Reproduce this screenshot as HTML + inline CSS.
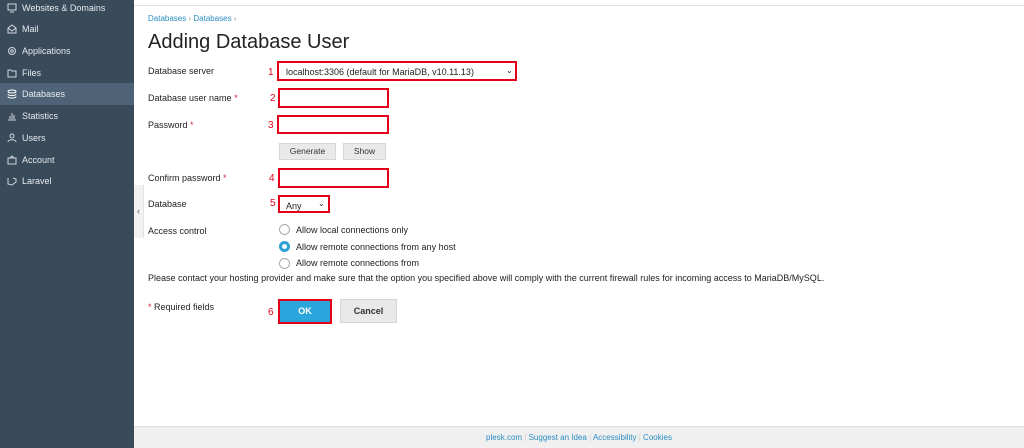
<!DOCTYPE html>
<html><head><meta charset="utf-8"><style>
*{margin:0;padding:0;box-sizing:border-box}
body{width:1024px;height:448px;overflow:hidden;font-family:"Liberation Sans",sans-serif;background:#fff;position:relative;color:#222}
.sb{position:absolute;left:0;top:0;width:134px;height:448px;background:#394a5b}
.it{position:absolute;left:0;width:134px;height:22px;color:#e6ebf0;font-size:9px;line-height:22px;padding-left:22px}
.it.act{background:#4e6377}
.ic{position:absolute;left:7px;top:6px;width:10px;height:10px}
.a{position:absolute;font-size:9px;white-space:nowrap}
.red{position:absolute;border:2px solid #e4001b}
.n{position:absolute;color:#e4001b;font-size:10px}
.btn{position:absolute;background:#e9e9e9;border:1px solid #d6d6d6;font-size:8.5px;text-align:center;color:#333}
.rad{position:absolute;width:11px;height:11px;border:1px solid #aaa;border-radius:50%;background:#fff}
.star{color:#d2263a}
</style></head><body>
<div class="sb">
<div class="it" style="top:-3px"><svg class="ic" viewBox="0 0 10 10" fill="none" stroke="#cfd7df"><rect x="1" y="1" width="8" height="6"/><path d="M3 9h4"/></svg>Websites &amp; Domains</div>
<div class="it" style="top:18px"><svg class="ic" viewBox="0 0 10 10" fill="none" stroke="#cfd7df"><path d="M1 4l4-3 4 3v5H1z M1 4l4 3 4-3"/></svg>Mail</div>
<div class="it" style="top:40px"><svg class="ic" viewBox="0 0 10 10" fill="none" stroke="#cfd7df"><circle cx="5" cy="5" r="3.5"/><circle cx="5" cy="5" r="1.3"/></svg>Applications</div>
<div class="it" style="top:62px"><svg class="ic" viewBox="0 0 10 10" fill="none" stroke="#cfd7df"><path d="M1 2h3l1 1h4v6H1z"/></svg>Files</div>
<div class="it act" style="top:83px"><svg class="ic" viewBox="0 0 10 10" fill="none" stroke="#fff"><ellipse cx="5" cy="2.5" rx="4" ry="1.5"/><path d="M1 5c0 2 8 2 8 0M1 7.5c0 2 8 2 8 0"/></svg>Databases</div>
<div class="it" style="top:105px"><svg class="ic" viewBox="0 0 10 10" fill="none" stroke="#cfd7df"><path d="M1 9h8M3 8V5M5 8V2M7 8V4"/></svg>Statistics</div>
<div class="it" style="top:127px"><svg class="ic" viewBox="0 0 10 10" fill="none" stroke="#cfd7df"><circle cx="5" cy="3" r="2"/><path d="M1 9c0-3 8-3 8 0"/></svg>Users</div>
<div class="it" style="top:149px"><svg class="ic" viewBox="0 0 10 10" fill="none" stroke="#cfd7df"><rect x="1" y="3" width="8" height="6"/><path d="M3 3l2-2 2 2"/></svg>Account</div>
<div class="it" style="top:170px"><svg class="ic" viewBox="0 0 10 10" fill="none" stroke="#cfd7df"><path d="M1 2v6l4 1 4-3V3L6 2"/></svg>Laravel</div>
</div>
<div style="position:absolute;left:134px;top:185px;width:10px;height:53px;background:#f2f2f2;border-right:1px solid #e2e2e2;font-size:9px;color:#555;line-height:53px;text-align:center">‹</div>
<div style="position:absolute;left:134px;top:5px;width:890px;height:1px;background:#e3e3e3"></div>

<div class="a" style="left:148px;top:14px;font-size:8px;color:#2b8dc1">Databases <span style="color:#999">›</span> Databases <span style="color:#999">›</span></div>
<div class="a" style="left:148px;top:31px;font-size:20px;color:#222">Adding Database User</div>

<div class="a" style="left:148px;top:66px">Database server</div>
<div class="n" style="left:268px;top:67px">1</div>
<div class="red" style="left:277px;top:61px;width:240px;height:20px"></div>
<div class="a" style="left:286px;top:67px;font-size:9px">localhost:3306 (default for MariaDB, v10.11.13)</div>
<div class="a" style="left:506px;top:66px;font-size:8px">⌄</div>

<div class="a" style="left:148px;top:93px">Database user name <span class="star">*</span></div>
<div class="n" style="left:270px;top:93px">2</div>
<div class="red" style="left:278px;top:88px;width:111px;height:20px"></div>

<div class="a" style="left:148px;top:120px">Password <span class="star">*</span></div>
<div class="n" style="left:268px;top:120px">3</div>
<div class="red" style="left:277px;top:115px;width:112px;height:19px"></div>

<div class="btn" style="left:279px;top:143px;width:57px;height:17px;line-height:15px">Generate</div>
<div class="btn" style="left:343px;top:143px;width:43px;height:17px;line-height:15px">Show</div>

<div class="a" style="left:148px;top:173px">Confirm password <span class="star">*</span></div>
<div class="n" style="left:269px;top:173px">4</div>
<div class="red" style="left:278px;top:168px;width:111px;height:20px"></div>

<div class="a" style="left:148px;top:199px">Database</div>
<div class="n" style="left:270px;top:198px">5</div>
<div class="red" style="left:278px;top:195px;width:52px;height:18px"></div>
<div class="a" style="left:286px;top:201px">Any</div>
<div class="a" style="left:318px;top:199px;font-size:8px">⌄</div>

<div class="a" style="left:148px;top:226px">Access control</div>
<div class="rad" style="left:279px;top:224px"></div>
<div class="a" style="left:296px;top:225px">Allow local connections only</div>
<div class="rad" style="left:279px;top:241px;border:3px solid #2ba1d6"></div>
<div class="a" style="left:296px;top:242px">Allow remote connections from any host</div>
<div class="rad" style="left:279px;top:258px"></div>
<div class="a" style="left:296px;top:258px">Allow remote connections from</div>
<div class="a" style="left:148px;top:273px">Please contact your hosting provider and make sure that the option you specified above will comply with the current firewall rules for incoming access to MariaDB/MySQL.</div>

<div class="a" style="left:148px;top:302px"><span class="star">*</span> Required fields</div>
<div class="n" style="left:268px;top:307px">6</div>
<div style="position:absolute;left:278px;top:299px;width:54px;height:25px;background:#2ba6dc;border:2px solid #e4001b;color:#fff;font-size:9px;font-weight:bold;text-align:center;line-height:21px">OK</div>
<div class="btn" style="left:340px;top:299px;width:57px;height:24px;line-height:22px;font-size:9px;font-weight:bold">Cancel</div>

<div style="position:absolute;left:134px;top:426px;width:890px;height:22px;background:#f0f0f0;border-top:1px solid #e0e0e0;font-size:8px;color:#2b8dc1;text-align:center;line-height:21px">plesk.com <span style="color:#ccc">|</span> Suggest an Idea <span style="color:#ccc">|</span> Accessibility <span style="color:#ccc">|</span> Cookies</div>
</body></html>
